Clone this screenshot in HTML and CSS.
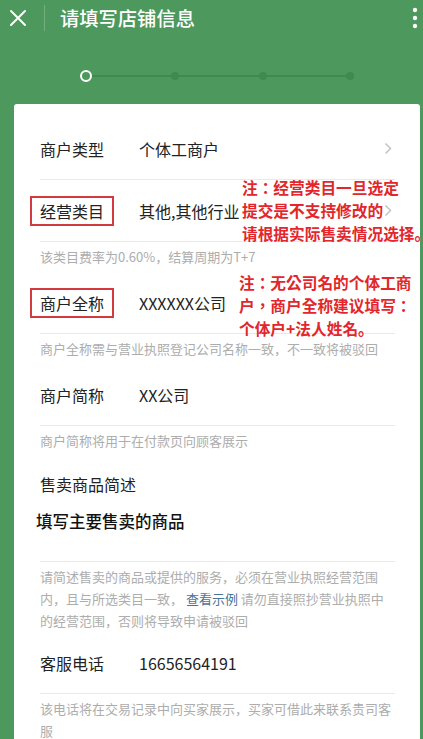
FILE: index.html
```html
<!DOCTYPE html>
<html lang="zh-CN">
<head>
<meta charset="utf-8">
<title>请填写店铺信息</title>
<link rel="stylesheet" href="styles.css">
</head>
<body>
<header class="topbar">
  <svg class="close-icon" width="18" height="18" viewBox="0 0 18 18"><path d="M2 2 L16 16 M16 2 L2 16" stroke="#fff" stroke-width="2" stroke-linecap="round" fill="none"/></svg>
  <span class="divider"></span>
  <h1 class="title">请填写店铺信息</h1>
  <svg class="more-icon" width="6" height="22" viewBox="0 0 6 22"><circle cx="3" cy="3" r="2.2" fill="#fff"/><circle cx="3" cy="11" r="2.2" fill="#fff"/><circle cx="3" cy="19" r="2.2" fill="#fff"/></svg>
</header>

<div class="steps">
  <span class="step-current"></span>
  <span class="step-line"></span>
  <span class="step-dot"></span>
  <span class="step-line"></span>
  <span class="step-dot"></span>
  <span class="step-line"></span>
  <span class="step-dot"></span>
</div>

<main class="card">
  <div class="row">
    <span class="label">商户类型</span>
    <span class="value">个体工商户</span>
    <svg class="chevron" width="8" height="13" viewBox="0 0 8 13"><path d="M1.5 1.5 L6.5 6.5 L1.5 11.5" stroke="#c4c4c4" stroke-width="1.5" fill="none"/></svg>
  </div>
  <div class="row">
    <span class="label"><span class="marked">经营类目</span></span>
    <span class="value">其他,其他行业</span>
    <svg class="chevron" width="8" height="13" viewBox="0 0 8 13"><path d="M1.5 1.5 L6.5 6.5 L1.5 11.5" stroke="#c4c4c4" stroke-width="1.5" fill="none"/></svg>
  </div>
  <p class="hint">该类目费率为0.60%，结算周期为T+7</p>
  <div class="row">
    <span class="label"><span class="marked">商户全称</span></span>
    <span class="value">XXXXXX公司</span>
  </div>
  <p class="hint">商户全称需与营业执照登记公司名称一致，不一致将被驳回</p>
  <div class="row">
    <span class="label">商户简称</span>
    <span class="value">XX公司</span>
  </div>
  <p class="hint">商户简称将用于在付款页向顾客展示</p>
  <div class="desc">
    <div class="desc-title">售卖商品简述</div>
    <div class="desc-input">填写主要售卖的商品</div>
  </div>
  <p class="hint hint-multi">请简述售卖的商品或提供的服务，必须在营业执照经营范围内，且与所选类目一致， <span class="link">查看示例</span> 请勿直接照抄营业执照中的经营范围，否则将导致申请被驳回</p>
  <div class="row">
    <span class="label">客服电话</span>
    <span class="value">16656564191</span>
  </div>
  <p class="hint">该电话将在交易记录中向买家展示，买家可借此来联系贵司客服</p>

  <div class="note note-one" lang="zh-Hant">注：经营类目一旦选定<br>提交是不支持修改的<br>请根据实际售卖情况选择<span lang="zh-CN">。</span></div>
  <div class="note note-two" lang="zh-Hant">注：无公司名的个体工商<br>户，商户全称建议填写：<br>个体户+法人姓名<span lang="zh-CN">。</span></div>
</main>
</body>
</html>
```

FILE: styles.css
```css
html, body {
  margin: 0;
  padding: 0;
  overflow-x: hidden;
}
body {
  background: #4d985c;
  font-family: "Noto Sans CJK SC", "Noto Sans", sans-serif;
  color: #222;
  min-height: 739px;
}
.topbar {
  height: 36px;
  display: flex;
  align-items: center;
  padding: 0 5px 0 9px;
}
.close-icon {
  flex: none;
}
.divider {
  width: 1px;
  height: 26px;
  margin-left: 17px;
  background: rgba(255, 255, 255, 0.22);
}
.title {
  margin: 0 0 0 15px;
  font-size: 19.3px;
  font-weight: 500;
  color: #fff;
  flex: 1;
  line-height: 24px;
}
.more-icon {
  flex: none;
}
.steps {
  display: flex;
  align-items: center;
  width: 274px;
  margin-left: 80px;
  padding: 34px 0 22px;
  height: 12px;
}
.step-current {
  width: 8px;
  height: 8px;
  border: 2px solid #fff;
  border-radius: 50%;
  flex: none;
}
.step-line {
  flex: 1;
  height: 2px;
  background: #3f8a4e;
}
.step-dot {
  width: 8px;
  height: 8px;
  border-radius: 50%;
  background: #3f8a4e;
  flex: none;
}
.card {
  position: relative;
  margin-left: 14px;
  width: 355px;
  background: #fff;
  border-radius: 3px 3px 0 0;
  padding: 14px 25px 20px 26px;
  min-height: 640px;
}
.row {
  display: flex;
  align-items: center;
  height: 61px;
  border-bottom: 1px solid #e9e9e9;
  font-size: 16px;
}
.label {
  width: 99px;
  flex: none;
  color: #222;
}
.value {
  flex: 1;
  color: #222;
  white-space: nowrap;
}
.chevron {
  flex: none;
  margin-right: 3px;
}
.marked {
  position: relative;
  display: inline-block;
  line-height: 16px;
}
.marked::after {
  content: "";
  position: absolute;
  top: -7px;
  bottom: -7px;
  left: -10px;
  right: -10px;
  border: 2px solid #d23a40;
}
.hint {
  margin: 0;
  padding: 4px 0 4px;
  font-size: 13px;
  line-height: 22px;
  color: #adadad;
}
.hint-multi {
  padding-bottom: 0;
}
.link {
  color: #4a7395;
}
.desc {
  padding: 16px 0 28px;
  border-bottom: 1px solid #e9e9e9;
}
.desc-title {
  font-size: 16px;
  line-height: 24px;
  color: #222;
}
.desc-input {
  margin: 13px 0 0 -4px;
  font-size: 16.5px;
  line-height: 24px;
  font-weight: 500;
  color: #111;
}
.note {
  position: absolute;
  color: #e3262b;
  font-family: "Noto Sans CJK TC", "Noto Sans CJK SC", sans-serif;
  font-size: 15.7px;
  line-height: 23px;
  font-weight: 700;
  white-space: nowrap;
}
.note-one {
  left: 228px;
  top: 72px;
}
.note-two {
  left: 225px;
  top: 167px;
}
```
